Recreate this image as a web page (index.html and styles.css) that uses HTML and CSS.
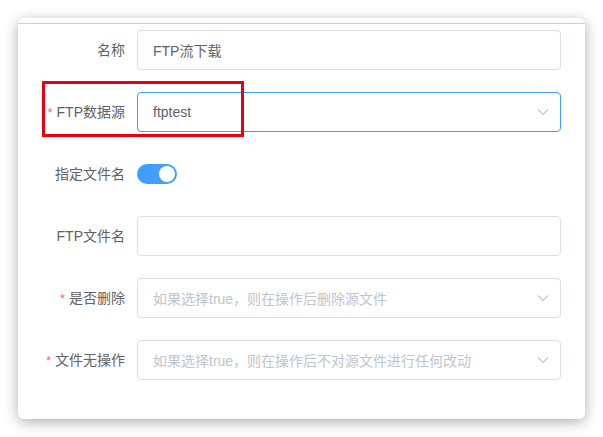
FILE: index.html
```html
<!DOCTYPE html>
<html>
<head>
<meta charset="utf-8">
<link rel="stylesheet" href="styles.css">
</head>
<body>
<div class="page">
  <div class="card">
    <div class="topline"></div>
    <form class="form">
      <div class="row">
        <label class="label">名称</label>
        <div class="control"><div class="input">FTP流下载</div></div>
      </div>
      <div class="row">
        <label class="label"><span class="star">*</span>FTP数据源</label>
        <div class="control"><div class="input select focus"><span>ftptest</span>
          <svg class="chev" width="12" height="8" viewBox="0 0 12 8"><path d="M1 1.5 L6 6.5 L11 1.5" fill="none" stroke="#c0c4cc" stroke-width="1.2"/></svg></div></div>
      </div>
      <div class="row">
        <label class="label">指定文件名</label>
        <div class="control"><span class="switch"><span class="dot"></span></span></div>
      </div>
      <div class="row">
        <label class="label">FTP文件名</label>
        <div class="control"><div class="input"></div></div>
      </div>
      <div class="row">
        <label class="label"><span class="star">*</span>是否删除</label>
        <div class="control"><div class="input select"><span class="ph">如果选择true，则在操作后删除源文件</span>
          <svg class="chev" width="12" height="8" viewBox="0 0 12 8"><path d="M1 1.5 L6 6.5 L11 1.5" fill="none" stroke="#c0c4cc" stroke-width="1.2"/></svg></div></div>
      </div>
      <div class="row">
        <label class="label"><span class="star">*</span>文件无操作</label>
        <div class="control"><div class="input select"><span class="ph">如果选择true，则在操作后不对源文件进行任何改动</span>
          <svg class="chev" width="12" height="8" viewBox="0 0 12 8"><path d="M1 1.5 L6 6.5 L11 1.5" fill="none" stroke="#c0c4cc" stroke-width="1.2"/></svg></div></div>
      </div>
    </form>
    <div class="mark"></div>
  </div>
</div>
</body>
</html>
```
FILE: styles.css
```css
html, body { margin: 0; padding: 0; background: #fff; }
body { font-family: "Liberation Sans", "Noto Sans CJK SC", sans-serif; font-size: 14px; color: #606266; }
.page { padding: 18px 18px 18px 18px; }
.card {
  position: relative;
  width: 567px;
  height: 401px;
  box-sizing: border-box;
  background: #fff;
  border-radius: 6px;
  box-shadow: 0 3px 14px rgba(0,0,0,0.32);
  padding-top: 5px;
}
.topline { height: 1px; background: #cfcfd2; }
.form { display: flex; flex-direction: column; gap: 22px; padding: 6px 24px 0 0; }
.row { display: flex; align-items: center; height: 40px; }
.label { width: 119px; box-sizing: border-box; padding-right: 12px; text-align: right; color: #606266; line-height: 40px; white-space: nowrap; }
.star { color: #f56c6c; margin-right: 4px; font-size: 13px; }
.control { flex: 1; display: flex; align-items: center; }
.input {
  flex: 1; height: 40px; box-sizing: border-box;
  border: 1px solid #dcdfe6; border-radius: 4px;
  padding: 0 15px; display: flex; align-items: center;
  color: #606266;
}
.input.focus { border-color: #409eff; }
.select { justify-content: space-between; }
.ph { color: #c0c4cc; }
.chev { margin-right: -4px; }
.switch { width: 40px; height: 20px; border-radius: 10px; background: #409eff; position: relative; display: inline-block; }
.dot { position: absolute; top: 2px; right: 2px; width: 16px; height: 16px; border-radius: 50%; background: #fff; }
.mark {
  position: absolute; left: 24px; top: 63px; width: 202px; height: 56px;
  box-sizing: border-box; border: 3px solid #e60012;
}
```
